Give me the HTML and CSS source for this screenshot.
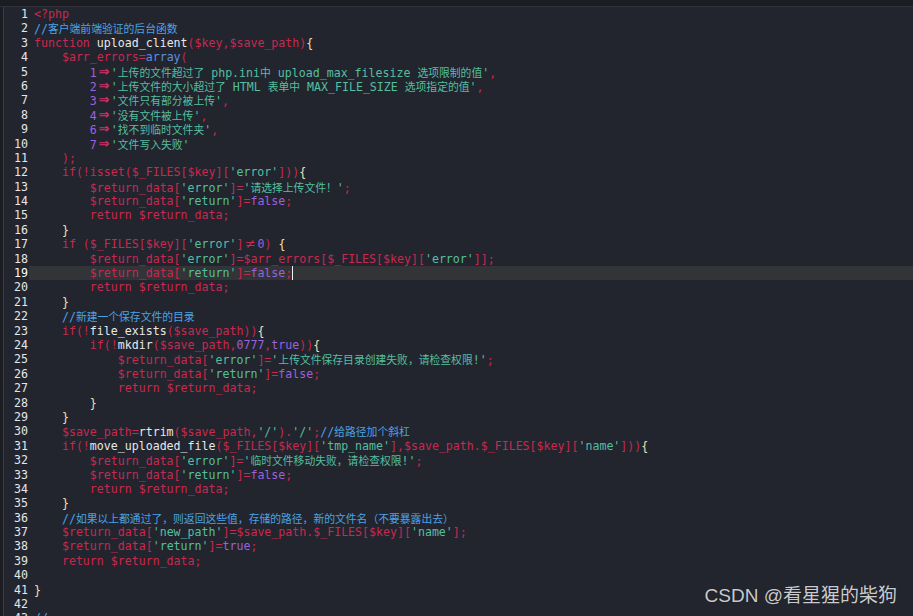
FILE: index.html
```html
<!DOCTYPE html>
<html lang="zh">
<head>
    <meta charset="UTF-8">
    <title>upload.php</title>
    <link rel="stylesheet" href="styles.css">
</head>
<body>
    <div class="editor">
        <div class="topbar"></div>
        <div class="body">
            <div class="line"><span class="num">1</span><span class="code"><span class="k">&lt;?php</span></span></div>
            <div class="line"><span class="num">2</span><span class="code"><span class="c">//<span class="z">客户端前端验证的后台函数</span></span></span></div>
            <div class="line"><span class="num">3</span><span class="code"><span class="k">function</span> <span class="f">upload_client</span><span class="k">($key,$save_path)</span><span class="b">{</span></span></div>
            <div class="line"><span class="num">4</span><span class="code">    <span class="k">$arr_errors=</span><span class="a">array</span><span class="k">(</span></span></div>
            <div class="line"><span class="num">5</span><span class="code">        <span class="n">1</span><span class="ar">⇒</span><span class="s">'<span class="z">上传的文件超过了</span> php.ini<span class="z">中</span> upload_max_filesize <span class="z">选项限制的值</span>'</span><span class="k">,</span></span></div>
            <div class="line"><span class="num">6</span><span class="code">        <span class="n">2</span><span class="ar">⇒</span><span class="s">'<span class="z">上传文件的大小超过了</span> HTML <span class="z">表单中</span> MAX_FILE_SIZE <span class="z">选项指定的值</span>'</span><span class="k">,</span></span></div>
            <div class="line"><span class="num">7</span><span class="code">        <span class="n">3</span><span class="ar">⇒</span><span class="s">'<span class="z">文件只有部分被上传</span>'</span><span class="k">,</span></span></div>
            <div class="line"><span class="num">8</span><span class="code">        <span class="n">4</span><span class="ar">⇒</span><span class="s">'<span class="z">没有文件被上传</span>'</span><span class="k">,</span></span></div>
            <div class="line"><span class="num">9</span><span class="code">        <span class="n">6</span><span class="ar">⇒</span><span class="s">'<span class="z">找不到临时文件夹</span>'</span><span class="k">,</span></span></div>
            <div class="line"><span class="num">10</span><span class="code">        <span class="n">7</span><span class="ar">⇒</span><span class="s">'<span class="z">文件写入失败</span>'</span></span></div>
            <div class="line"><span class="num">11</span><span class="code">    <span class="k">);</span></span></div>
            <div class="line"><span class="num">12</span><span class="code">    <span class="k">if(!isset($_FILES[$key][</span><span class="s">'error'</span><span class="k">]))</span><span class="b">{</span></span></div>
            <div class="line"><span class="num">13</span><span class="code">        <span class="k">$return_data[</span><span class="s">'error'</span><span class="k">]=</span><span class="s">'<span class="z">请选择上传文件！</span>'</span><span class="k">;</span></span></div>
            <div class="line"><span class="num">14</span><span class="code">        <span class="k">$return_data[</span><span class="s">'return'</span><span class="k">]=</span><span class="n">false</span><span class="k">;</span></span></div>
            <div class="line"><span class="num">15</span><span class="code">        <span class="k">return $return_data;</span></span></div>
            <div class="line"><span class="num">16</span><span class="code">    <span class="b">}</span></span></div>
            <div class="line"><span class="num">17</span><span class="code">    <span class="k">if ($_FILES[$key][</span><span class="s">'error'</span><span class="k">]</span><span class="ne">≠</span><span class="n">0</span><span class="k">)</span> <span class="b">{</span></span></div>
            <div class="line"><span class="num">18</span><span class="code">        <span class="k">$return_data[</span><span class="s">'error'</span><span class="k">]=$arr_errors[$_FILES[$key][</span><span class="s">'error'</span><span class="k">]];</span></span></div>
            <div class="line current"><span class="num">19</span><span class="code">        <span class="k">$return_data[</span><span class="s">'return'</span><span class="k">]=</span><span class="n">false</span><span class="k">;</span><span class="cursor"></span></span></div>
            <div class="line"><span class="num">20</span><span class="code">        <span class="k">return $return_data;</span></span></div>
            <div class="line"><span class="num">21</span><span class="code">    <span class="b">}</span></span></div>
            <div class="line"><span class="num">22</span><span class="code">    <span class="c">//<span class="z">新建一个保存文件的目录</span></span></span></div>
            <div class="line"><span class="num">23</span><span class="code">    <span class="k">if(!</span><span class="f">file_exists</span><span class="k">($save_path))</span><span class="b">{</span></span></div>
            <div class="line"><span class="num">24</span><span class="code">        <span class="k">if(!</span><span class="f">mkdir</span><span class="k">($save_path,</span><span class="n">0777</span><span class="k">,</span><span class="n">true</span><span class="k">))</span><span class="b">{</span></span></div>
            <div class="line"><span class="num">25</span><span class="code">            <span class="k">$return_data[</span><span class="s">'error'</span><span class="k">]=</span><span class="s">'<span class="z">上传文件保存目录创建失败，请检查权限</span>!'</span><span class="k">;</span></span></div>
            <div class="line"><span class="num">26</span><span class="code">            <span class="k">$return_data[</span><span class="s">'return'</span><span class="k">]=</span><span class="n">false</span><span class="k">;</span></span></div>
            <div class="line"><span class="num">27</span><span class="code">            <span class="k">return $return_data;</span></span></div>
            <div class="line"><span class="num">28</span><span class="code">        <span class="b">}</span></span></div>
            <div class="line"><span class="num">29</span><span class="code">    <span class="b">}</span></span></div>
            <div class="line"><span class="num">30</span><span class="code">    <span class="k">$save_path=</span><span class="f">rtrim</span><span class="k">($save_path,</span><span class="s">'/'</span><span class="k">).</span><span class="s">'/'</span><span class="k">;</span><span class="c">//<span class="z">给路径加个斜杠</span></span></span></div>
            <div class="line"><span class="num">31</span><span class="code">    <span class="k">if(!</span><span class="f">move_uploaded_file</span><span class="k">($_FILES[$key][</span><span class="s">'tmp_name'</span><span class="k">],$save_path.$_FILES[$key][</span><span class="s">'name'</span><span class="k">]))</span><span class="b">{</span></span></div>
            <div class="line"><span class="num">32</span><span class="code">        <span class="k">$return_data[</span><span class="s">'error'</span><span class="k">]=</span><span class="s">'<span class="z">临时文件移动失败，请检查权限</span>!'</span><span class="k">;</span></span></div>
            <div class="line"><span class="num">33</span><span class="code">        <span class="k">$return_data[</span><span class="s">'return'</span><span class="k">]=</span><span class="n">false</span><span class="k">;</span></span></div>
            <div class="line"><span class="num">34</span><span class="code">        <span class="k">return $return_data;</span></span></div>
            <div class="line"><span class="num">35</span><span class="code">    <span class="b">}</span></span></div>
            <div class="line"><span class="num">36</span><span class="code">    <span class="c">//<span class="z">如果以上都通过了，则返回这些值，存储的路径，新的文件名（不要暴露出去）</span></span></span></div>
            <div class="line"><span class="num">37</span><span class="code">    <span class="k">$return_data[</span><span class="s">'new_path'</span><span class="k">]=$save_path.$_FILES[$key][</span><span class="s">'name'</span><span class="k">];</span></span></div>
            <div class="line"><span class="num">38</span><span class="code">    <span class="k">$return_data[</span><span class="s">'return'</span><span class="k">]=</span><span class="n">true</span><span class="k">;</span></span></div>
            <div class="line"><span class="num">39</span><span class="code">    <span class="k">return $return_data;</span></span></div>
            <div class="line"><span class="num">40</span><span class="code"></span></div>
            <div class="line"><span class="num">41</span><span class="code"><span class="b">}</span></span></div>
            <div class="line"><span class="num">42</span><span class="code"></span></div>
            <div class="line"><span class="num">43</span><span class="code"><span class="c">//</span></span></div>
        </div>
    </div>
    <div class="watermark">CSDN @看星猩的柴狗</div>
</body>
</html>
```

FILE: styles.css
```css
html, body {
    margin: 0;
    height: 100%;
    overflow: hidden;
}

body {
    background-color: #22252e;
    font-family: "DejaVu Sans Mono", "Noto Sans CJK SC", monospace;
}

.editor {
    height: 100%;
    display: flex;
    flex-direction: column;
}

.topbar {
    height: 6px;
    background-color: #1b1d23;
    border-bottom: 1px solid #30333b;
    flex-shrink: 0;
}

.body {
    flex-grow: 1;
    border-left: 1px solid #3a3d46;
    margin-left: 3px;
    box-shadow: -3px 0 0 #1b1d23;
}

.line {
    display: flex;
    height: 14.4px;
    line-height: 14.4px;
    font-size: 11.6px;
    white-space: pre;
}

.line .num {
    width: 24px;
    text-align: right;
    color: #e6e6e9;
    flex-shrink: 0;
}

.line .code {
    padding-left: 5px;
    margin-left: 1px;
    flex-grow: 1;
    color: #c8294f;
}

.line.current .code {
    background-color: #333437;
}

.line.current .num {
    color: #ffffff;
}

.cursor {
    display: inline-block;
    width: 0;
    height: 14px;
    border-left: 1px solid #f0f0f0;
    vertical-align: top;
}

/* CJK runs are 1.5 cells wide in the editor font */
.z {
    font-family: "Noto Sans CJK SC", sans-serif;
    font-size: 10.8px;
}

/* tokens */
.k { color: #c8294f; }
.c { color: #4aa3e6; }
.f { color: #e8e8ea; }
.s { color: #55bfa0; }
.n { color: #9a62db; }
.a { color: #5d8fe0; }
.b { color: #efe2ad; }

/* ligatures: => and != take two cells */
.ar, .ne {
    display: inline-block;
    width: 14px;
    text-align: center;
    font-family: "DejaVu Sans", sans-serif;
    font-size: 13px;
    font-weight: bold;
    line-height: 14.4px;
    color: #d0306a;
    vertical-align: top;
}

.ne {
    font-weight: normal;
    color: #c8294f;
}

.watermark {
    position: absolute;
    right: 16px;
    bottom: 9px;
    font-family: "Liberation Sans", "Noto Sans CJK SC", sans-serif;
    font-size: 19px;
    color: #cacbce;
    text-shadow: 0 0 1px rgba(0, 0, 0, 0.6);
}
```
